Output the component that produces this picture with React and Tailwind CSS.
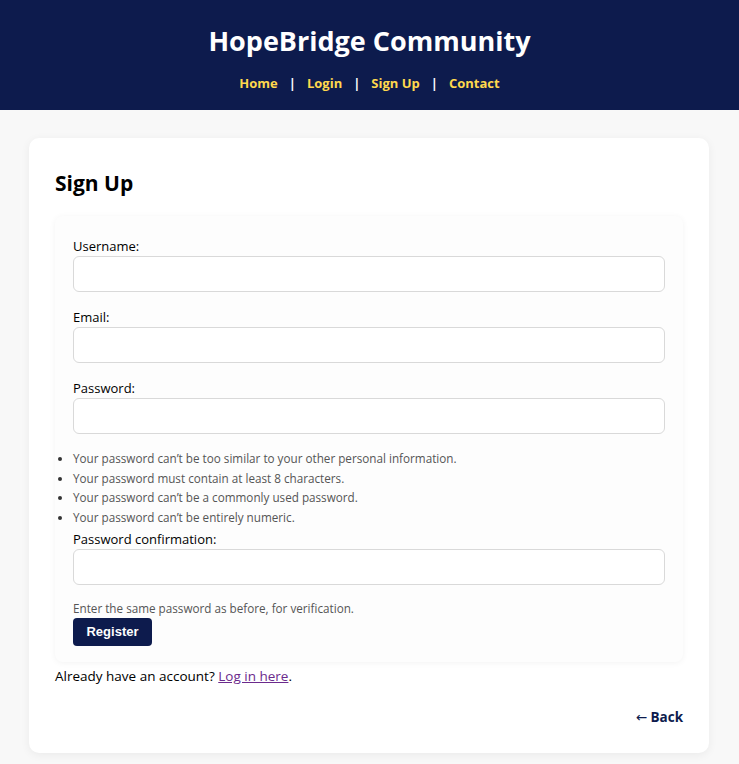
import { useState } from 'react'

const navLinks = ['Home', 'Login', 'Sign Up', 'Contact']

const rules = [
  "Your password can’t be too similar to your other personal information.",
  'Your password must contain at least 8 characters.',
  "Your password can’t be a commonly used password.",
  "Your password can’t be entirely numeric.",
]

function Field({ label, type = 'text', value, onChange }) {
  return (
    <div className="flex flex-col">
      <label className="text-[13px] leading-[20px] text-black">{label}</label>
      <input
        type={type}
        value={value}
        onChange={onChange}
        className="h-[36px] w-full rounded-[6px] border border-[#d9d9d9] bg-white px-2 focus:outline-none"
      />
    </div>
  )
}

export default function App() {
  const [form, setForm] = useState({ username: '', email: '', password1: '', password2: '' })
  const set = (k) => (e) => setForm({ ...form, [k]: e.target.value })

  return (
    <div className="min-h-screen bg-[#f8f8f8] font-['Open_Sans',sans-serif] text-black">
      {/* Header */}
      <header className="flex h-[110px] flex-col items-center bg-[#0d1b4d] pt-[23px]">
        <h1 className="text-[27px] font-bold leading-[36px] text-white">HopeBridge Community</h1>
        <nav className="mt-[14px] flex items-center text-[13px] font-bold leading-[20px] text-[#ffd84d]">
          {navLinks.map((link, i) => (
            <span key={link} className="flex items-center">
              {i > 0 && <span className="mx-[11px] text-white">|</span>}
              <a href="#">{link}</a>
            </span>
          ))}
        </nav>
      </header>

      {/* Card */}
      <main className="pl-[29px] pr-[30px] pt-[28px] pb-[12px]">
        <div className="rounded-[10px] bg-white px-[26px] pt-[30px] pb-[26px] shadow-[0_2px_10px_rgba(0,0,0,0.06)]">
          <h2 className="text-[21px] font-bold leading-[30px]">Sign Up</h2>

          <form
            onSubmit={(e) => e.preventDefault()}
            className="mt-[18px] rounded-[8px] bg-[#fdfdfd] px-[18px] pt-[20px] pb-[16px] shadow-[0_1px_6px_rgba(0,0,0,0.05)]"
          >
            <div className="flex flex-col gap-[15px]">
              <Field label="Username:" value={form.username} onChange={set('username')} />
              <Field label="Email:" type="email" value={form.email} onChange={set('email')} />
              <Field label="Password:" type="password" value={form.password1} onChange={set('password1')} />
            </div>

            <ul className="mt-[15px] -ml-[10px] list-disc pl-[10px] text-[11.7px] leading-[19.7px] text-[#555] marker:text-[#333]">
              {rules.map((r) => (
                <li key={r}>{r}</li>
              ))}
            </ul>

            <div className="mt-[1px]">
              <Field label="Password confirmation:" type="password" value={form.password2} onChange={set('password2')} />
            </div>

            <p className="mt-[14px] text-[11.7px] leading-[18px] text-[#555]">
              Enter the same password as before, for verification.
            </p>
            <button
              type="submit"
              className="mt-[1px] h-[28px] w-[79px] rounded-[4px] bg-[#0d1b4d] font-['Liberation_Sans',sans-serif] text-[13px] font-bold text-white"
            >
              Register
            </button>
          </form>

          <p className="mt-[4px] text-[13.5px] leading-[20px]">
            Already have an account?{' '}
            <a href="#" className="text-[#6b2a8c] underline">Log in here</a>.
          </p>

          <div className="mt-[21px] flex justify-end">
            <a href="#" className="text-[13.5px] font-bold leading-[20px] text-[#0d1b4d]">
              <span className="font-['DejaVu_Sans',sans-serif] font-normal">←</span> Back
            </a>
          </div>
        </div>
      </main>
    </div>
  )
}
